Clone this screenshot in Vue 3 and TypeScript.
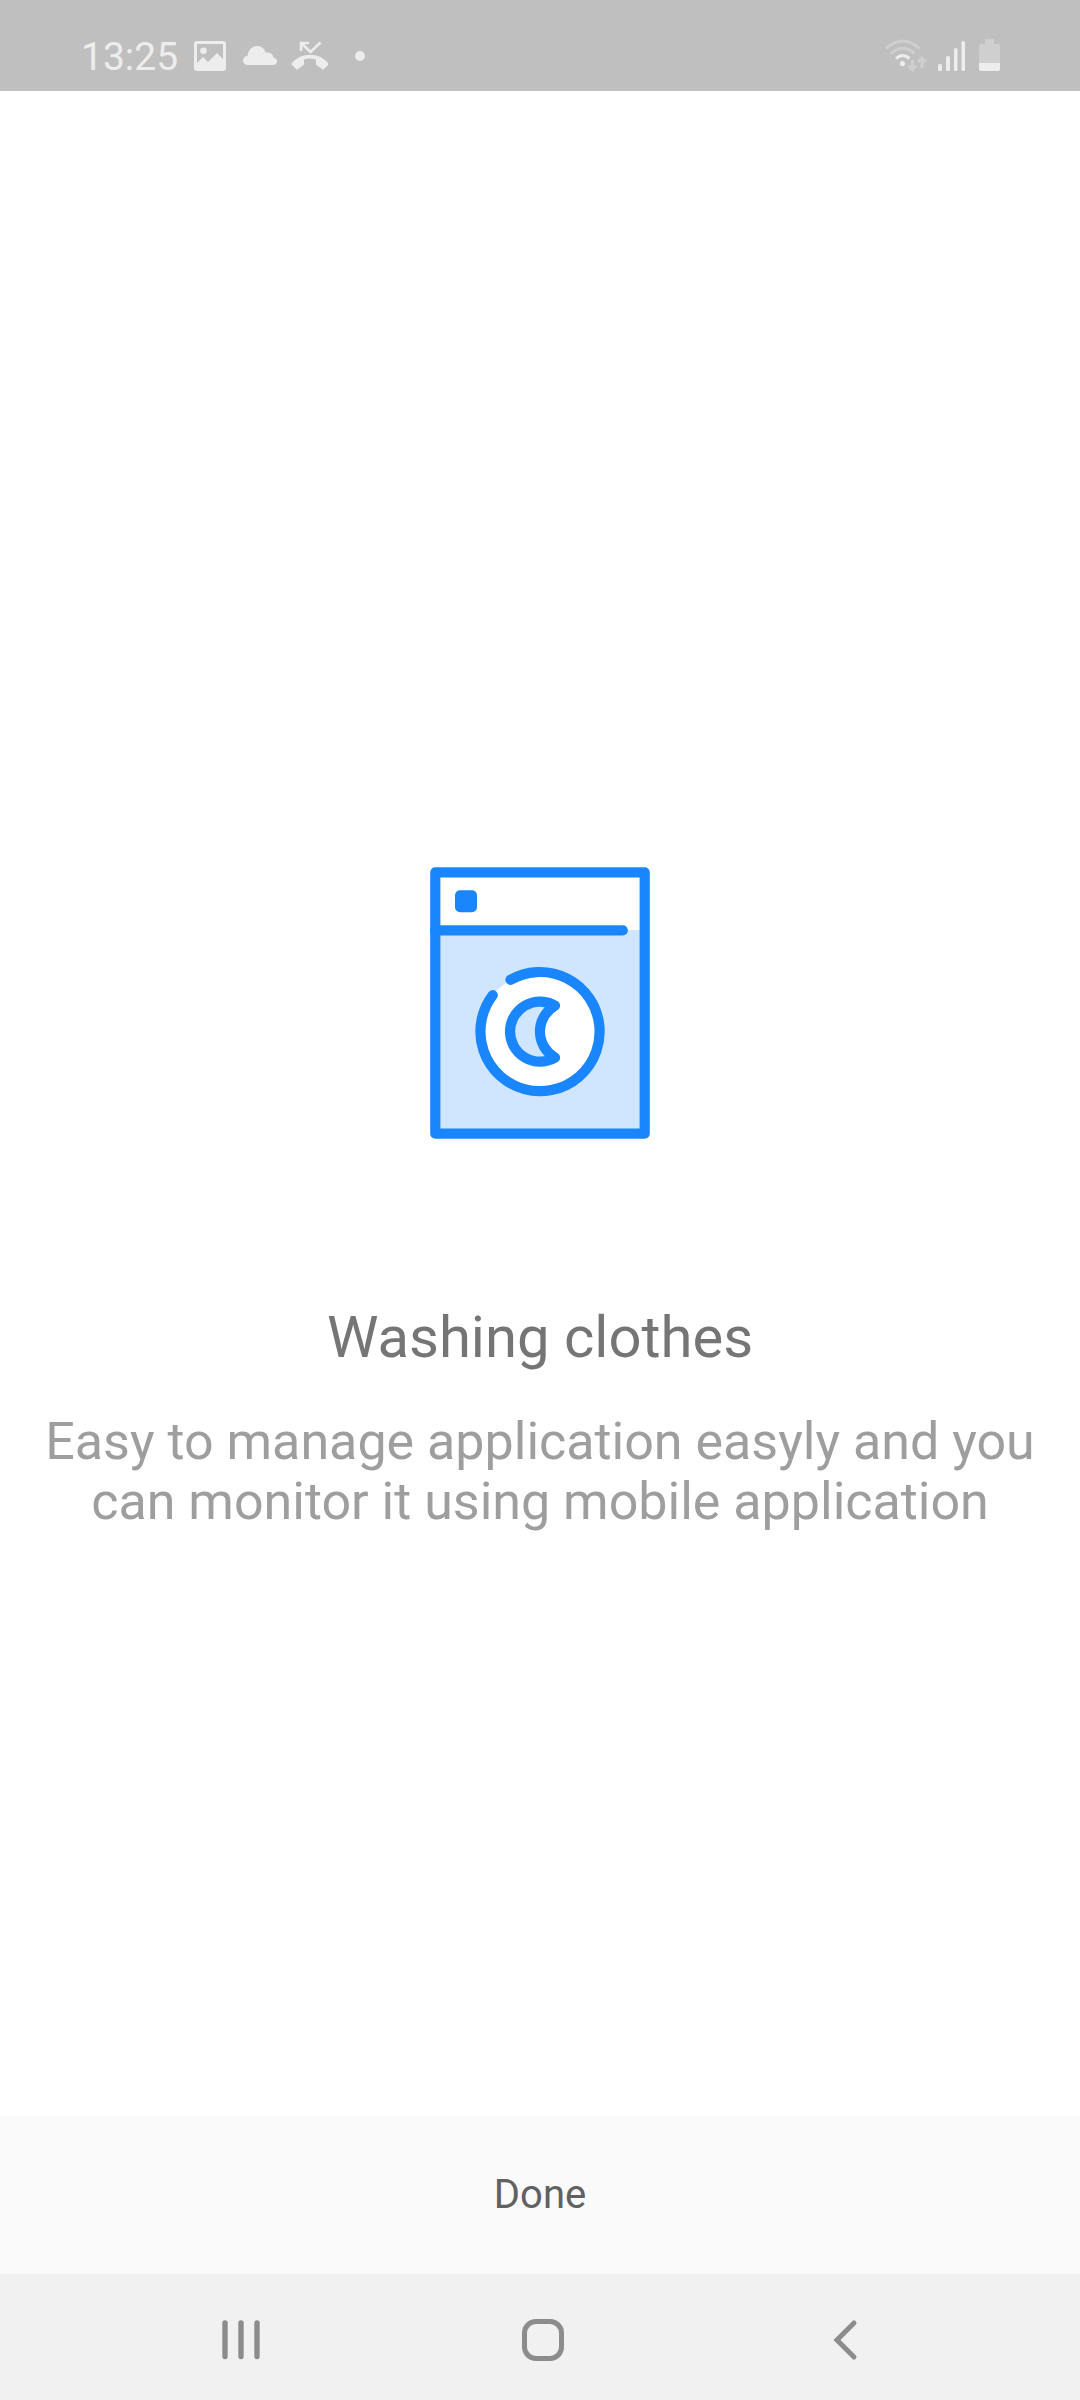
<script setup lang="ts">
const time: string = '13:25'
const title: string = 'Washing clothes'
const description: string =
  'Easy to manage application easyly and you can monitor it using mobile application'
</script>

<template>
  <div class="screen">
    <header class="status">
      <div class="status-left">
        <time class="clock">{{ time }}</time>
        <svg class="i-photo" width="32" height="30" viewBox="0 0 32 30" aria-label="Picture">
          <path fill-rule="evenodd" fill="#ededed" d="M3 0H29Q32 0 32 3V27Q32 30 29 30H3Q0 30 0 27V3Q0 0 3 0ZM3 3V22L9 16L14 21L23 12L29 18V3ZM9.500 6.500A3.300 3.300 0 1 1 9.500 13.100A3.300 3.300 0 1 1 9.500 6.500Z" />
        </svg>
        <svg class="i-cloud" width="34" height="20" viewBox="0 1 34 20" aria-label="Cloud">
          <path fill="#ededed" d="M5 20C2 20 0 18 0 15.500C0 13 2 11 4.500 10.800C5.500 5 9 1 14 1C18.500 1 21.500 3.500 22.500 7.500C27 7 30 9 30.500 12.500C32.500 12.700 34 14.300 34 16.200C34 18.500 32.500 20 30 20Z" />
        </svg>
        <svg class="i-call" width="38" height="30" viewBox="0 0 38 30" aria-label="Missed call">
          <path fill="none" stroke="#ededed" stroke-width="2.600" d="M10 10V2H18M10 2L19.500 11L29.500 1.500" />
          <path fill="#ededed" d="M1 22C10 11 28 11 37 22Q38 23 37 24L33 28Q32 29 31 28L26 24.500Q25 24 25 22.500V18.500Q19 16.500 13 18.500V22.500Q13 24 12 24.500L7 28Q6 29 5 28L1 24Q0 23 1 22Z" />
        </svg>
        <span class="dot"></span>
      </div>
      <div class="status-right">
        <svg width="42" height="34" viewBox="0 0 42 34" fill="none" aria-label="Wi-Fi">
          <g stroke="#cfcfcf" stroke-width="3">
            <path d="M1 9.500Q17.500 -5.500 34.500 9.500" />
            <path d="M6 14.500Q17.500 4 29.500 14.500" />
            <path d="M27.500 21V30M23.500 27L27.500 31L31.500 27M37 29V20M33 23L37 19L41 23" />
          </g>
          <path stroke="#ededed" stroke-width="3" d="M11 19.500Q17.500 13.500 24.500 19.500" />
          <circle cx="17.500" cy="24.500" r="2.600" fill="#ededed" />
        </svg>
        <svg class="i-signal" width="28" height="32" viewBox="0 0 28 32" fill="#ededed" aria-label="Signal">
          <rect x="0" y="24" width="4" height="7" rx="1.500" />
          <rect x="8" y="16" width="4" height="15" rx="1.500" />
          <rect x="16" y="8" width="3.500" height="23" rx="1.500" />
          <rect x="23.500" y="1" width="3.500" height="30" rx="1.500" />
        </svg>
        <svg class="i-battery" width="21" height="34" viewBox="0 1 21 34" aria-label="Battery">
          <path fill="#cfcfcf" d="M6 1H15V6H19Q21 6 21 8V31Q21 33 19 33H2Q0 33 0 31V8Q0 6 2 6H6Z" />
          <path fill="#ededed" d="M0 25H21V31Q21 33 19 33H2Q0 33 0 31Z" />
        </svg>
      </div>
    </header>

    <main class="slide">
      <svg class="machine" width="220" height="272" viewBox="0 0 220 272" fill="none" aria-hidden="true">
        <rect x="5" y="63" width="210" height="204" fill="#d0e6ff" />
        <circle cx="110" cy="164.600" r="59.500" fill="#fff" />
        <g stroke="#1a86fd" stroke-width="10.200" stroke-linecap="round" stroke-linejoin="round">
          <rect x="5.300" y="5.300" width="209.400" height="261.400" />
          <path d="M5 63.300H192.800" />
          <path d="M80.500 112.800A59.600 59.600 0 1 1 62.800 128.200" />
          <path fill="#d0e6ff" d="M125 138.600A30 30 0 1 0 125 190.600A30 30 0 0 1 125 138.600Z" />
        </g>
        <rect x="25" y="23.300" width="22" height="22" rx="5" fill="#1a86fd" />
      </svg>
      <h1>{{ title }}</h1>
      <p>{{ description }}</p>
    </main>

    <footer class="actions">
      <button type="button" class="done">Done</button>
    </footer>

    <nav class="system-nav" aria-label="System">
      <button type="button" aria-label="Recent apps">
        <svg width="42" height="42" viewBox="0 0 42 42" stroke="#8c8c8c" stroke-width="5.400" stroke-linecap="round">
          <path d="M5 4V37.500M21 4V37.500M37 4V37.500" />
        </svg>
      </button>
      <button type="button" aria-label="Home">
        <svg width="42" height="42" viewBox="0 0 42 42" fill="none" stroke="#8c8c8c" stroke-width="5">
          <rect x="2.500" y="2.500" width="37" height="37" rx="11.500" />
        </svg>
      </button>
      <button type="button" aria-label="Back">
        <svg width="42" height="42" viewBox="0 0 42 42" fill="none" stroke="#8c8c8c" stroke-width="5" stroke-linecap="round">
          <path d="M30 4L13 21L30 38" />
        </svg>
      </button>
    </nav>
  </div>
</template>

<style>
body {
  margin: 0;
}
</style>

<style scoped>
.screen {
  min-height: 100vh;
  display: flex;
  flex-direction: column;
  background: #fff;
  font-family: Roboto, "Liberation Sans", sans-serif;
}
svg {
  display: block;
  flex: none;
}
.status {
  box-sizing: border-box;
  height: 91px;
  padding: 20px 80px 0 81px;
  display: flex;
  align-items: center;
  justify-content: space-between;
  background: #bfbfbf;
}
.status-left,
.status-right {
  display: flex;
  align-items: center;
}
.clock {
  padding-top: 2px;
  font-size: 39px;
  line-height: 46px;
  color: #ededed;
}
.i-photo {
  margin-left: 16px;
}
.i-cloud {
  margin-left: 17px;
}
.i-call {
  margin-left: 14px;
}
.dot {
  width: 10px;
  height: 10px;
  margin-left: 26px;
  border-radius: 50%;
  background: #ededed;
}
.i-signal {
  margin-left: 11px;
}
.i-battery {
  margin-left: 13px;
}
.slide {
  flex: 1;
  display: flex;
  flex-direction: column;
  align-items: center;
  justify-content: center;
  padding: 192px 40px 0;
}
.machine {
  margin-bottom: 164px;
}
h1 {
  margin: 0 0 41px;
  font-size: 58px;
  line-height: 68px;
  font-weight: 400;
  color: #757575;
}
p {
  margin: 0;
  font-size: 52px;
  line-height: 60px;
  color: #9e9e9e;
  text-align: center;
}
.actions {
  display: flex;
  height: 158px;
  background: #fafafa;
}
button {
  flex: 1;
  display: flex;
  align-items: center;
  justify-content: center;
  padding: 0;
  border: 0;
  background: none;
  font-family: inherit;
  cursor: pointer;
}
.done {
  font-size: 40px;
  line-height: 48px;
  color: #616161;
}
.system-nav {
  box-sizing: border-box;
  display: flex;
  height: 126px;
  padding: 6px 84px 0 90px;
  background: #f1f1f1;
}
</style>
